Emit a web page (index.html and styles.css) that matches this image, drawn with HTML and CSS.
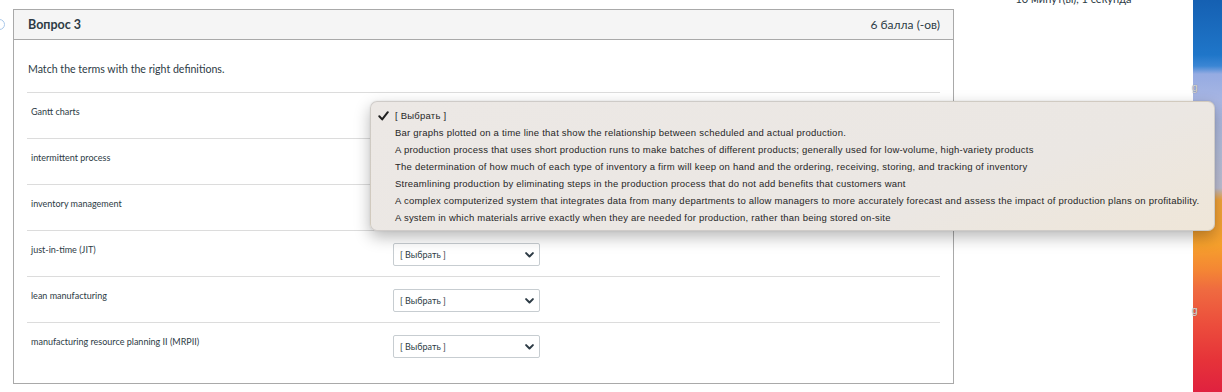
FILE: index.html
```html
<!DOCTYPE html>
<html lang="ru">
<head>
<meta charset="utf-8">
<title>Вопрос 3</title>
<link rel="stylesheet" href="styles.css">
</head>
<body>
<div class="screen">
  <div class="page">
    <span class="bookmark"></span>
    <section class="question">
      <header class="q-head">
        <h2 class="q-title">Вопрос 3</h2>
        <span class="q-points">6 балла (-ов)</span>
      </header>
      <div class="q-body">
        <p class="prompt">Match the terms with the right definitions.</p>
        <div class="rows">
          <div class="row"><span class="term">Gantt charts</span><div class="select"><span>[ Выбрать ]</span><svg class="chev" viewBox="0 0 9 6" width="9" height="6"><polyline points="1.1,1.1 4.5,4.5 7.9,1.1"/></svg></div></div>
          <div class="row"><span class="term">intermittent process</span><div class="select"><span>[ Выбрать ]</span><svg class="chev" viewBox="0 0 9 6" width="9" height="6"><polyline points="1.1,1.1 4.5,4.5 7.9,1.1"/></svg></div></div>
          <div class="row"><span class="term">inventory management</span><div class="select"><span>[ Выбрать ]</span><svg class="chev" viewBox="0 0 9 6" width="9" height="6"><polyline points="1.1,1.1 4.5,4.5 7.9,1.1"/></svg></div></div>
          <div class="row"><span class="term">just-in-time (JIT)</span><div class="select"><span>[ Выбрать ]</span><svg class="chev" viewBox="0 0 9 6" width="9" height="6"><polyline points="1.1,1.1 4.5,4.5 7.9,1.1"/></svg></div></div>
          <div class="row"><span class="term">lean manufacturing</span><div class="select"><span>[ Выбрать ]</span><svg class="chev" viewBox="0 0 9 6" width="9" height="6"><polyline points="1.1,1.1 4.5,4.5 7.9,1.1"/></svg></div></div>
          <div class="row"><span class="term">manufacturing resource planning II (MRPII)</span><div class="select"><span>[ Выбрать ]</span><svg class="chev" viewBox="0 0 9 6" width="9" height="6"><polyline points="1.1,1.1 4.5,4.5 7.9,1.1"/></svg></div></div>
        </div>
      </div>
    </section>
    <aside class="side">
      <div class="timer">10 минут(ы), 1 секунда</div>
    </aside>
  </div>
  <div class="wall">
    <span class="wall-label l1">g</span>
    <span class="wall-label l2">g</span>
  </div>

  <ul class="menu">
    <li class="item checked"><span class="mark"><svg viewBox="0 0 11 10" width="11" height="10"><polyline points="1.3,5.3 4.2,8.4 9.8,1.2"/></svg></span>[ Выбрать ]</li>
    <li class="item"><span class="mark"></span>Bar graphs plotted on a time line that show the relationship between scheduled and actual production.</li>
    <li class="item"><span class="mark"></span>A production process that uses short production runs to make batches of different products; generally used for low-volume, high-variety products</li>
    <li class="item"><span class="mark"></span>The determination of how much of each type of inventory a firm will keep on hand and the ordering, receiving, storing, and tracking of inventory</li>
    <li class="item"><span class="mark"></span>Streamlining production by eliminating steps in the production process that do not add benefits that customers want</li>
    <li class="item"><span class="mark"></span>A complex computerized system that integrates data from many departments to allow managers to more accurately forecast and assess the impact of production plans on profitability.</li>
    <li class="item"><span class="mark"></span>A system in which materials arrive exactly when they are needed for production, rather than being stored on-site</li>
  </ul>
</div>
</body>
</html>
```

FILE: styles.css
```css
* { box-sizing: border-box; }

html, body {
  margin: 0;
  padding: 0;
  background: #ffffff;
}

body {
  width: 1222px;
  height: 392px;
  overflow: hidden;
  font-family: Lato, "Open Sans", sans-serif;
  color: #2d3b45;
}

.screen {
  position: relative;
  display: flex;
  width: 1222px;
  height: 392px;
  overflow: hidden;
}

.page {
  position: relative;
  display: flex;
  width: 1193px;
  height: 392px;
  background: #ffffff;
}

.bookmark {
  position: absolute;
  left: -6px;
  top: 19px;
  width: 11px;
  height: 11px;
  border: 1.5px solid #a9c8ea;
  border-radius: 50%;
}

.question {
  margin: 9px 0 0 13px;
  width: 941px;
  height: 375px;
  border: 1px solid #a9a9a9;
  display: flex;
  flex-direction: column;
}

.q-head {
  height: 30px;
  background: #f5f5f5;
  border-bottom: 1px solid #a9a9a9;
  display: flex;
  align-items: center;
  justify-content: space-between;
  padding: 0 13px 0 14px;
}

.q-title {
  margin: 0;
  font-size: 12.5px;
  font-weight: 700;
  color: #2d3b45;
}

.q-points {
  font-size: 12px;
  color: #2d3b45;
}

.q-body {
  padding: 22px 13px 0 13px;
}

.prompt {
  margin: 0 0 16px 1px;
  font-size: 10.6px;
  line-height: 14px;
  color: #2d3b45;
}

.row {
  height: 46px;
  border-top: 1px solid #dcdcdc;
  display: grid;
  grid-template-columns: 366px 147px;
  align-items: start;
}

.term {
  padding: 13px 0 0 4px;
  font-size: 9px;
  line-height: 12px;
  color: #2d3b45;
}

.select {
  margin-top: 12px;
  height: 23px;
  border: 1px solid #c7cdd1;
  border-radius: 2px;
  background: #ffffff;
  display: flex;
  align-items: center;
  justify-content: space-between;
  padding: 0 5px 0 6px;
  font-size: 9px;
  color: #2d3b45;
}

.chev polyline {
  fill: none;
  stroke: #2d3b45;
  stroke-width: 2;
  stroke-linecap: round;
  stroke-linejoin: round;
}

.side {
  flex: 1;
  display: flex;
  justify-content: center;
}

.timer {
  margin: -8px 0 0 0;
  font-size: 11px;
  line-height: 14px;
  color: #2d3b45;
  white-space: nowrap;
}

.wall {
  position: relative;
  width: 29px;
  height: 392px;
  background: linear-gradient(180deg,
    #1560b2 0px,
    #1f76c9 55px,
    #3b86d4 66px,
    #95abe2 74px,
    #a8b6e3 100px,
    #b5bfdc 150px,
    #bfc0d4 188px,
    #f3a53b 200px,
    #f6a02c 245px,
    #f48634 270px,
    #ef6a40 290px,
    #ec4d3c 325px,
    #e63339 360px,
    #e0213f 392px);
}

.wall-label {
  position: absolute;
  left: -1px;
  font-family: "Liberation Sans", sans-serif;
  font-size: 10px;
  line-height: 10px;
  color: #dcdcdc;
  text-shadow: 0 0 1px #666;
}

.l1 { top: 83px; }
.l2 { top: 306px; }

.menu {
  position: absolute;
  left: 370px;
  top: 101px;
  width: 845px;
  margin: 0;
  padding: 5px 0 4px 0;
  list-style: none;
  background: linear-gradient(160deg, #ece8e5 0%, #ebe7e3 70%, #efe6d8 100%);
  border: 1px solid rgba(0, 0, 0, 0.12);
  border-radius: 7px;
  box-shadow: 0 6px 16px rgba(0, 0, 0, 0.28), 0 0 2px rgba(0, 0, 0, 0.1);
  font-family: "Liberation Sans", Arial, sans-serif;
  font-size: 9.5px;
  color: #262626;
}

.item {
  display: flex;
  align-items: center;
  height: 17px;
  white-space: nowrap;
  letter-spacing: 0.23px;
}

.mark {
  width: 24px;
  flex: none;
  display: flex;
  align-items: center;
  padding-left: 7px;
}

.mark polyline {
  fill: none;
  stroke: #1f1f1f;
  stroke-width: 2;
  stroke-linecap: round;
  stroke-linejoin: round;
}
```
